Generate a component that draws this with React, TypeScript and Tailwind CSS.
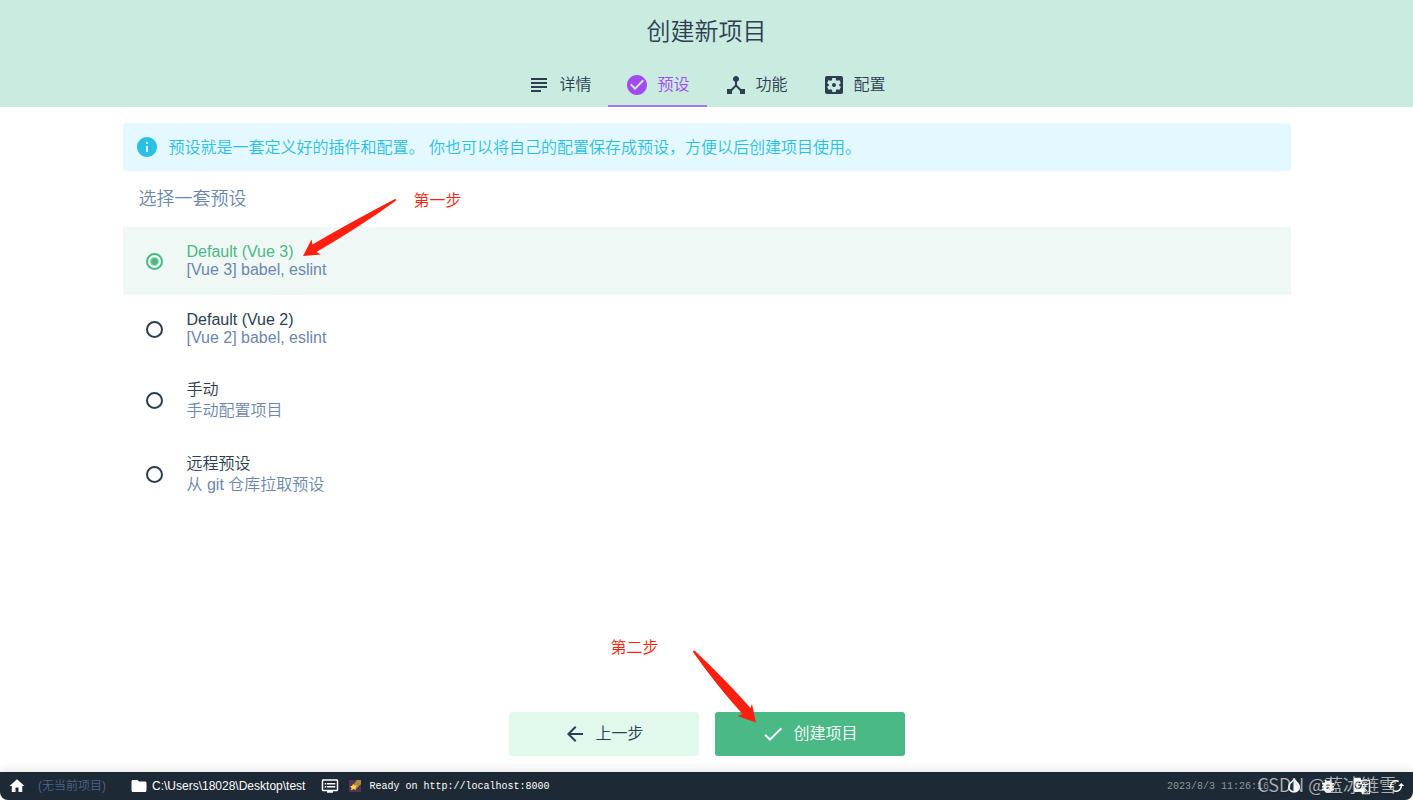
import { useState } from "react";
import {
  MdSubject,
  MdCheckCircle,
  MdDeviceHub,
  MdSettingsApplications,
  MdInfo,
  MdArrowBack,
  MdCheck,
  MdHome,
  MdFolder,
  MdDvr,
  MdInvertColors,
  MdBugReport,
  MdGTranslate,
  MdCached,
} from "react-icons/md";

const tabs = [
  { id: "details", icon: MdSubject, label: "详情" },
  { id: "presets", icon: MdCheckCircle, label: "预设" },
  { id: "features", icon: MdDeviceHub, label: "功能" },
  { id: "config", icon: MdSettingsApplications, label: "配置" },
];

const presets = [
  { id: "vue3", name: "Default (Vue 3)", description: "[Vue 3] babel, eslint", line: "leading-[18px]" },
  { id: "vue2", name: "Default (Vue 2)", description: "[Vue 2] babel, eslint", line: "leading-[18px]" },
  { id: "manual", name: "手动", description: "手动配置项目", line: "leading-[21px]" },
  { id: "remote", name: "远程预设", description: "从 git 仓库拉取预设", line: "leading-[21px]" },
];

const tools = [
  { icon: MdInvertColors, label: "切换主题" },
  { icon: MdBugReport, label: "报告问题" },
  { icon: MdGTranslate, label: "翻译" },
  { icon: MdCached, label: "重置" },
];

export default function App() {
  const [tab, setTab] = useState("presets");
  const [preset, setPreset] = useState("vue3");

  return (
    <div className="flex min-h-screen flex-col bg-white font-['Liberation_Sans','Noto_Sans_CJK_SC',sans-serif] text-base font-[350] text-[#2c3e50]">
      {/* Header */}
      <header className="bg-[#caebe0]">
        <h1 className="pt-4 text-center text-2xl leading-8 font-[350]">创建新项目</h1>
        <nav className="mt-4 flex justify-center">
          {tabs.map((item) => (
            <button
              key={item.id}
              type="button"
              onClick={() => setTab(item.id)}
              className={`flex h-[43px] items-center gap-2 border-b-2 px-[17px] ${
                tab === item.id ? "border-[#a974ed] text-[#a349f2]" : "border-transparent"
              }`}
            >
              <item.icon className="size-6" />
              <span>{item.label}</span>
            </button>
          ))}
        </nav>
      </header>

      <main className="relative mx-auto flex w-full max-w-[1200px] grow flex-col px-4 pt-4">
        <div className="flex h-12 items-center gap-2.5 rounded-[3px] bg-[#e3f8ff] px-3 text-[#2ac0e4]">
          <MdInfo className="size-6 shrink-0" />
          <p className="pt-0.5">预设就是一套定义好的插件和配置。 你也可以将自己的配置保存成预设，方便以后创建项目使用。</p>
        </div>

        <div className="relative">
          <h2 className="px-4 py-4 text-lg leading-6 text-[#6b87ad]">选择一套预设</h2>
          <span className="absolute top-4 left-[291px] leading-7 text-[#ff1f10]">第一步</span>
          <svg className="absolute top-6 left-[176px] h-16 w-[100px]" viewBox="0 0 100 64" fill="#ff1f10">
            <path d="M96 4 Q98 4 96.500 6 Q62 31 17.500 57 L22 59.500 L4 61 L12.500 44.500 L13.500 49.500 Q50 28 96 4 Z" />
          </svg>
        </div>

        {/* Presets */}
        <div role="radiogroup" aria-label="选择一套预设">
          {presets.map((item) => (
            <label
              key={item.id}
              className="flex items-center gap-6 py-4 pl-[23px] has-checked:bg-[#eff8f4]"
            >
              <input
                type="radio"
                name="preset"
                checked={preset === item.id}
                onChange={() => setPreset(item.id)}
                className="peer size-[17px] shrink-0 appearance-none rounded-full border-2 border-[#2c3e50] checked:border-[#4bb986] checked:bg-[radial-gradient(circle,#4bb986_3px,transparent_5px)]"
              />
              <span className={`flex flex-col peer-checked:text-[#4bb986] ${item.line}`}>
                <span>{item.name}</span>
                <span className="text-[#6b87ad]">{item.description}</span>
              </span>
            </label>
          ))}
        </div>

        <div className="relative mt-auto flex justify-center gap-4 py-4">
          <span className="absolute -top-15 left-1/2 -ml-24 text-[#ff1f10]">第二步</span>
          <button type="button" className="flex h-11 w-[190px] items-center justify-center gap-2 rounded-[3px] bg-[#e1f8ec]">
            <MdArrowBack className="size-6" />
            <span>上一步</span>
          </button>
          <button type="button" className="flex h-11 w-[190px] items-center justify-center gap-2 rounded-[3px] bg-[#4bb986] text-white">
            <MdCheck className="size-6" />
            <span>创建项目</span>
          </button>
          <svg className="absolute -top-12 left-1/2 -ml-4 h-20 w-[68px]" viewBox="0 0 68 80" fill="#ff1f10">
            <path d="M2 4 Q2 2 4 3 Q34 31 59.500 60 L61 56 L65 74.500 L46.500 68 L51.500 66 Q26 38 2 4 Z" />
          </svg>
        </div>
      </main>

      {/* Status bar */}
      <footer className="relative flex h-7 items-center rounded-b-lg bg-[#1d2935] text-xs text-white shadow-[0_-2px_10px_rgba(0,0,0,0.1)]">
        <button type="button" aria-label="主页" className="ml-2">
          <MdHome className="size-[18px]" />
        </button>
        <span className="ml-3 text-[#4a6487]">(无当前项目)</span>
        <button type="button" className="ml-6 flex items-center gap-1">
          <MdFolder className="size-[18px]" />
          <span className="font-medium">C:\Users\18028\Desktop\test</span>
        </button>
        <button type="button" aria-label="日志" className="ml-4 flex items-center gap-2.5">
          <MdDvr className="size-[18px]" />
          <svg className="size-3" viewBox="0 0 12 12">
            <rect width="12" height="12" fill="#533359" />
            <path d="M4 5 L8 0 H12 V4 L7 9 Z" fill="#b08a3e" />
            <path d="M4 4 L5.500 5.500 L8 5.500 L6.500 7.500 L7 10 L4.500 9 L2 10.500 L2.500 8 L1 6 L3 6 Z" fill="#ffd83b" />
          </svg>
        </button>
        <span className="ml-2 pt-0.5 font-['Liberation_Mono',monospace] text-[10px]">Ready on http://localhost:8000</span>
        <span className="ml-auto pt-0.5 font-['Liberation_Mono',monospace] text-[10px] text-[#8e949a]">2023/8/3 11:26:16</span>
        <div className="mr-2 ml-4 flex gap-4">
          {tools.map((tool) => (
            <button key={tool.label} type="button" aria-label={tool.label}>
              <tool.icon className="size-[18px]" />
            </button>
          ))}
        </div>
        <span className="absolute right-4 bottom-1 font-['Noto_Sans_CJK_SC',sans-serif] text-lg leading-6 font-[350] text-white/65 text-shadow-xs">
          CSDN @蓝冰链雪
        </span>
      </footer>
    </div>
  );
}
